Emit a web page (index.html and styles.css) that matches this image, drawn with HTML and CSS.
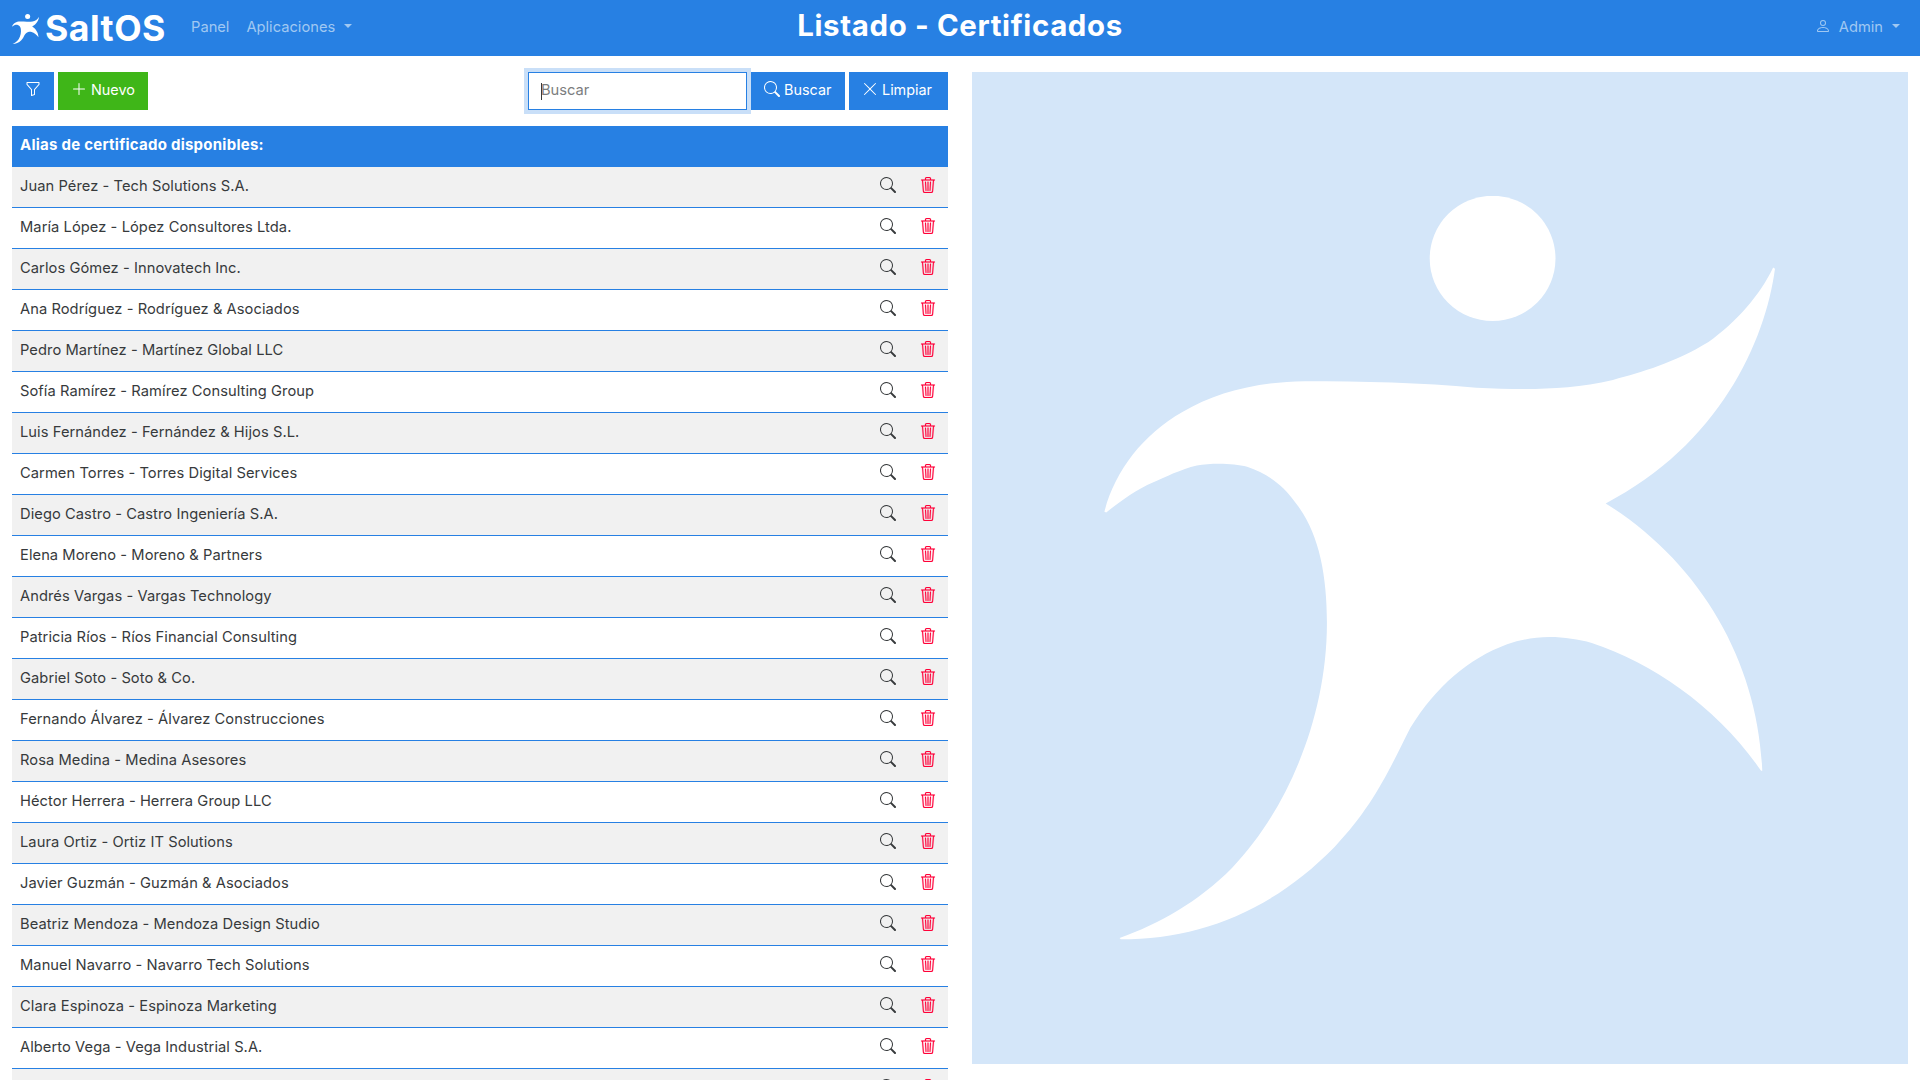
FILE: index.html
```html
<!DOCTYPE html>
<html lang="es">
<head>
<meta charset="utf-8">
<title>Listado - Certificados</title>
<link rel="stylesheet" href="styles.css">
</head>
<body>
<svg class="sprite" aria-hidden="true">
  <symbol id="funnel" viewBox="0 0 16 16"><path d="M1.5 1.5A.5.5 0 0 1 2 1h12a.5.5 0 0 1 .5.5v2a.5.5 0 0 1-.128.334L10 8.692V13.5a.5.5 0 0 1-.342.474l-3 1A.5.5 0 0 1 6 14.5V8.692L1.628 3.834A.5.5 0 0 1 1.5 3.5zm1 .5v1.308l4.372 4.858A.5.5 0 0 1 7 8.5v5.306l2-.666V8.5a.5.5 0 0 1 .128-.334L13.5 3.308V2z"/></symbol>
  <symbol id="plus" viewBox="0 0 16 16"><path fill-rule="evenodd" d="M8 2a.5.5 0 0 1 .5.5v5h5a.5.5 0 0 1 0 1h-5v5a.5.5 0 0 1-1 0v-5h-5a.5.5 0 0 1 0-1h5v-5A.5.5 0 0 1 8 2"/></symbol>
  <symbol id="search" viewBox="0 0 16 16"><path d="M11.742 10.344a6.5 6.5 0 1 0-1.397 1.398h-.001q.044.06.098.115l3.85 3.85a1 1 0 0 0 1.415-1.414l-3.85-3.85a1 1 0 0 0-.115-.1zM12 6.5a5.5 5.5 0 1 1-11 0 5.5 5.5 0 0 1 11 0"/></symbol>
  <symbol id="x" viewBox="0 0 16 16"><path d="M2.146 2.854a.5.5 0 1 1 .708-.708L8 7.293l5.146-5.147a.5.5 0 0 1 .708.708L8.707 8l5.147 5.146a.5.5 0 0 1-.708.708L8 8.707l-5.146 5.147a.5.5 0 0 1-.708-.708L7.293 8z"/></symbol>
  <symbol id="person" viewBox="0 0 16 16"><path d="M8 8a3 3 0 1 0 0-6 3 3 0 0 0 0 6m2-3a2 2 0 1 1-4 0 2 2 0 0 1 4 0m4 8c0 1-1 1-1 1H3s-1 0-1-1 1-4 6-4 6 3 6 4m-1-.004c-.001-.246-.154-.986-.832-1.664C11.516 10.68 10.289 10 8 10s-3.516.68-4.168 1.332c-.678.678-.83 1.418-.832 1.664z"/></symbol>
  <symbol id="trash" viewBox="0 0 16 16"><path d="M6.5 1h3a.5.5 0 0 1 .5.5v1H6v-1a.5.5 0 0 1 .5-.5M11 2.5v-1A1.5 1.5 0 0 0 9.5 0h-3A1.5 1.5 0 0 0 5 1.5v1H1.5a.5.5 0 0 0 0 1h.538l.853 10.66A2 2 0 0 0 4.885 16h6.23a2 2 0 0 0 1.994-1.84l.853-10.66h.538a.5.5 0 0 0 0-1zm1.958 1-.846 10.58a1 1 0 0 1-.997.92h-6.23a1 1 0 0 1-.997-.92L3.042 3.5zm-7.487 1a.5.5 0 0 1 .528.47l.5 8.5a.5.5 0 0 1-.998.06L5 5.03a.5.5 0 0 1 .47-.53Zm5.058 0a.5.5 0 0 1 .47.53l-.5 8.5a.5.5 0 1 1-.998-.06l.5-8.5a.5.5 0 0 1 .528-.47M8 4.5a.5.5 0 0 1 .5.5v8.5a.5.5 0 0 1-1 0V5a.5.5 0 0 1 .5-.5"/></symbol>
  <symbol id="jumper" viewBox="132 124 671 744"><g transform="scale(.60465 .6429)">
    <ellipse cx="861" cy="290" rx="104" ry="97.5"/>
    <path d="M219 684C236 622 282 564 348 529C402 499 470 482 550 481C645 481 745 483 834 491C910 494 980 496 1060 479C1110 466 1160 453 1218 420C1265 388 1303 347 1325 304L1328 306C1312 420 1235 580 1048 671C1205 763 1300 918 1307 1087L1305 1087C1235 990 1128 920 1025 888C1003 883 980 879 955 879C930 879 908 883 885 890C820 913 768 955 725 1020C690 1085 665 1140 600 1205C495 1306 375 1349 246 1349L244 1347C310 1325 375 1290 430 1238C520 1150 587 1005 587 857C587 780 573 715 535 670C515 642 487 624 455 614C432 608 395 608 372 612C345 618 320 630 300 638C270 650 245 668 222 685Z"/>
  </g></symbol>
</svg>

<header class="navbar">
  <div class="nav-left">
    <a class="brand"><svg class="brand-mark"><use href="#jumper"/></svg><span class="brand-name">SaltOS</span></a>
    <a class="nav-link">Panel</a>
    <a class="nav-link dropdown">Aplicaciones</a>
  </div>
  <h1 class="title">Listado - Certificados</h1>
  <div class="nav-right"><a class="nav-link dropdown user"><svg class="icon"><use href="#person"/></svg>Admin</a></div>
</header>

<main class="content">
  <section class="list">
    <div class="toolbar">
      <button class="btn btn-filter"><svg class="icon"><use href="#funnel"/></svg></button>
      <button class="btn btn-new"><svg class="icon"><use href="#plus"/></svg><span>Nuevo</span></button>
      <div class="search-field"><input class="search-input" type="text" placeholder="Buscar"><span class="cursor"></span></div>
      <button class="btn btn-search"><svg class="icon"><use href="#search"/></svg><span>Buscar</span></button>
      <button class="btn btn-clear"><svg class="icon"><use href="#x"/></svg><span>Limpiar</span></button>
    </div>
    <div class="table" id="table">
      <div class="thead">Alias de certificado disponibles:</div>
    </div>
  </section>
  <aside class="panel"><svg class="panel-mark"><use href="#jumper"/></svg></aside>
</main>
<script src="rows.js"></script>
</body>
</html>
```
FILE: styles.css
```css
* { box-sizing: border-box; }

body {
  margin: 0;
  height: 1080px;
  overflow: hidden;
  background: #fff;
  color: #373a3c;
  font: 14.7px/24px Inter, "Liberation Sans", sans-serif;
}

svg { fill: currentColor; flex: none; }
.sprite { display: none; }
.icon { width: 16px; height: 16px; }

.navbar {
  display: grid;
  grid-template-columns: 1fr auto 1fr;
  height: 56px;
  padding: 0 12px;
  background: #2780e3;
  color: #fff;
}
.nav-left, .nav-right { display: flex; align-items: flex-start; }
.nav-right { justify-content: flex-end; padding-right: 8px; }
.brand { display: flex; width: 179px; }
.brand-mark { width: 27px; height: 30px; margin-top: 14px; }
.brand-name {
  margin: 7px 0 0 6px;
  font-size: 35.6px;
  font-weight: 700;
  line-height: 44px;
  letter-spacing: .5px;
}
.nav-link {
  display: flex;
  align-items: center;
  margin: 15px 17px 0 0;
  line-height: 24px;
  color: #a0c8f2;
}
.dropdown::after {
  content: "";
  margin: 0 0 3px 9px;
  border-top: 4.8px solid;
  border-right: 4.8px solid transparent;
  border-left: 4.8px solid transparent;
}
.user { margin-right: 0; }
.user .icon { margin: 0 8px 2px 0; }
.title {
  margin: 6px 0 0;
  font-size: 29.4px;
  font-weight: 700;
  line-height: 40px;
  letter-spacing: .65px;
}

.content {
  display: grid;
  grid-template-columns: 936px 936px;
  gap: 24px;
  padding: 16px 12px 0;
}

.toolbar { display: flex; gap: 4px; margin-bottom: 16px; }
.btn {
  display: flex;
  gap: 4px;
  height: 38px;
  padding: 9px 13px 0;
  border: 0;
  background: #2780e3;
  color: #fff;
  font: inherit;
  font-size: 14.4px;
  line-height: 17px;
  white-space: nowrap;
}
.btn-filter { width: 42px; }
.btn-new { width: 90px; background: #3fb618; }
.btn-search { width: 94px; }
.btn-clear { width: 99px; }
.search-field { position: relative; width: 219px; margin-left: auto; }
.search-input {
  width: 100%;
  height: 38px;
  padding: 5px 12px 7px;
  border: 1px solid #2780e3;
  outline: 0;
  box-shadow: 0 0 0 4px #c9dff8;
  color: #373a3c;
  font: inherit;
}
.search-input::placeholder { color: #7b7d7e; opacity: 1; }
.cursor {
  position: absolute;
  top: 11px;
  left: 13px;
  width: 1px;
  height: 17px;
  background: #373a3c;
}

.thead {
  height: 41px;
  padding: 7px 8px;
  background: #2780e3;
  color: #fff;
  font-size: 15px;
  font-weight: 700;
  letter-spacing: .25px;
}
.row {
  display: flex;
  align-items: flex-start;
  height: 41px;
  padding: 7px 12px 0 8px;
  border-bottom: 1px solid #2780e3;
}
.row:nth-child(even) { background: #f1f1f1; }
.name { flex: 1; letter-spacing: .06px; }
.row .icon { margin-top: 3px; }
.row .delete { margin: 2.5px 0 0 24px; color: #ff0039; stroke: currentColor; stroke-width: .2; }

.panel {
  display: grid;
  height: 992px;
  padding: 124px 0 0 132px;
  background: #d4e6f9;
  color: #fff;
}
.panel-mark { width: 671px; height: 744px; }
```
FILE: rows.js
```js
const names = [
  "Juan Pérez - Tech Solutions S.A.",
  "María López - López Consultores Ltda.",
  "Carlos Gómez - Innovatech Inc.",
  "Ana Rodríguez - Rodríguez & Asociados",
  "Pedro Martínez - Martínez Global LLC",
  "Sofía Ramírez - Ramírez Consulting Group",
  "Luis Fernández - Fernández & Hijos S.L.",
  "Carmen Torres - Torres Digital Services",
  "Diego Castro - Castro Ingeniería S.A.",
  "Elena Moreno - Moreno & Partners",
  "Andrés Vargas - Vargas Technology",
  "Patricia Ríos - Ríos Financial Consulting",
  "Gabriel Soto - Soto & Co.",
  "Fernando Álvarez - Álvarez Construcciones",
  "Rosa Medina - Medina Asesores",
  "Héctor Herrera - Herrera Group LLC",
  "Laura Ortiz - Ortiz IT Solutions",
  "Javier Guzmán - Guzmán & Asociados",
  "Beatriz Mendoza - Mendoza Design Studio",
  "Manuel Navarro - Navarro Tech Solutions",
  "Clara Espinoza - Espinoza Marketing",
  "Alberto Vega - Vega Industrial S.A.",
  ""
];
const table = document.getElementById("table");
for (const name of names) {
  const row = document.createElement("div");
  row.className = "row";
  row.innerHTML = '<span class="name"></span>' +
    '<svg class="icon"><use href="#search"/></svg>' +
    '<svg class="icon delete"><use href="#trash"/></svg>';
  row.firstChild.textContent = name;
  table.append(row);
}
```
